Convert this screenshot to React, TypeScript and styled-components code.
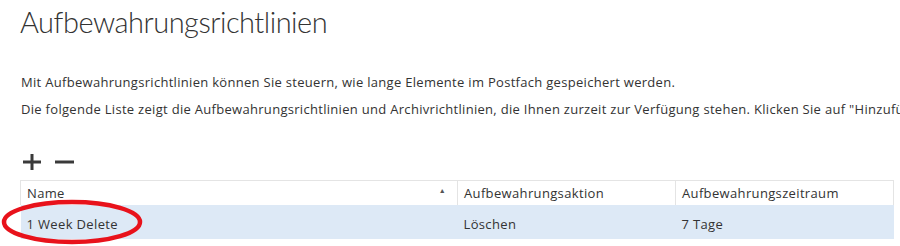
import styled, { createGlobalStyle } from 'styled-components'

const GlobalStyle = createGlobalStyle`
  html, body {
    margin: 0;
    padding: 0;
    background: #ffffff;
    overflow: hidden;
  }
  body {
    font-family: 'Open Sans', 'Liberation Sans', sans-serif;
    color: #333333;
  }
`

const Page = styled.main`
  position: relative;
  width: 900px;
  height: 246px;
  padding: 0 7px 0 20px;
  box-sizing: border-box;
  overflow: hidden;
`

const Title = styled.h1`
  margin: 0;
  padding-top: 2px;
  font-family: Lato, 'Open Sans', sans-serif;
  font-size: 29px;
  line-height: 40px;
  font-weight: 300;
  letter-spacing: -0.5px;
  color: #333333;
`

const Paragraph = styled.p`
  margin: 0;
  font-size: 13px;
  line-height: 27px;
  letter-spacing: 0.3px;
  white-space: nowrap;
  color: #333333;
  padding-left: 1px;
`

const Intro = styled.div`
  margin-top: 27px;
`

const Toolbar = styled.div`
  display: flex;
  gap: 12px;
  align-items: center;
  height: 22px;
  margin-top: 28px;
  padding-left: 2px;
`

const ToolButton = styled.button`
  display: flex;
  align-items: center;
  justify-content: center;
  width: 20px;
  height: 20px;
  padding: 0;
  border: none;
  background: none;
  color: #3a3a3a;
`

const Grid = styled.table`
  width: 873px;
  margin-top: 7px;
  border-collapse: collapse;
  table-layout: fixed;
  font-size: 13px;
  letter-spacing: 0.35px;
`

const HeadCell = styled.th<{ $width: number }>`
  position: relative;
  box-sizing: border-box;
  width: ${({ $width }) => $width}px;
  height: 24px;
  padding: 1px 6px 0;
  border: 1px solid #e4e4e4;
  border-bottom: none;
  text-align: left;
  font-weight: 400;
  color: #333333;
`

const SortMark = styled.span`
  position: absolute;
  right: 11px;
  top: 5px;
  font-size: 7px;
  color: #555555;
`

const Row = styled.tr`
  background: #dde9f6;
`

const Cell = styled.td`
  box-sizing: border-box;
  height: 34px;
  padding: 5px 6px 0;
  color: #333333;
`

const Marker = styled.svg`
  position: absolute;
  left: 0;
  top: 198px;
  pointer-events: none;
`

function PlusIcon() {
  return (
    <svg width="20" height="20" viewBox="0 0 20 20">
      <path d="M10 2v16M1 10h18" stroke="currentColor" strokeWidth="3" fill="none" />
    </svg>
  )
}

function MinusIcon() {
  return (
    <svg width="20" height="20" viewBox="0 0 20 20">
      <path d="M1 10h19" stroke="currentColor" strokeWidth="3" fill="none" />
    </svg>
  )
}

export default function App() {
  return (
    <>
      <GlobalStyle />
      <Page>
        <Title>Aufbewahrungsrichtlinien</Title>
        <Intro>
          <Paragraph>
            Mit Aufbewahrungsrichtlinien können Sie steuern, wie lange Elemente im Postfach gespeichert werden.
          </Paragraph>
          <Paragraph>
            Die folgende Liste zeigt die Aufbewahrungsrichtlinien und Archivrichtlinien, die Ihnen zurzeit zur Verfügung stehen. Klicken Sie auf "Hinzufügen", um weitere hinzuzufügen.
          </Paragraph>
        </Intro>
        <Toolbar>
          <ToolButton aria-label="Hinzufügen">
            <PlusIcon />
          </ToolButton>
          <ToolButton aria-label="Entfernen">
            <MinusIcon />
          </ToolButton>
        </Toolbar>
        <Grid>
          <thead>
            <tr>
              <HeadCell $width={437}>
                Name
                <SortMark>▲</SortMark>
              </HeadCell>
              <HeadCell $width={218}>Aufbewahrungsaktion</HeadCell>
              <HeadCell $width={218}>Aufbewahrungszeitraum</HeadCell>
            </tr>
          </thead>
          <tbody>
            <Row>
              <Cell>1 Week Delete</Cell>
              <Cell>Löschen</Cell>
              <Cell>7 Tage</Cell>
            </Row>
          </tbody>
        </Grid>
        <Marker width="150" height="48" viewBox="0 0 150 48">
          <ellipse cx="72" cy="24" rx="68" ry="20" fill="none" stroke="#e8121b" strokeWidth="4.5" />
        </Marker>
      </Page>
    </>
  )
}
